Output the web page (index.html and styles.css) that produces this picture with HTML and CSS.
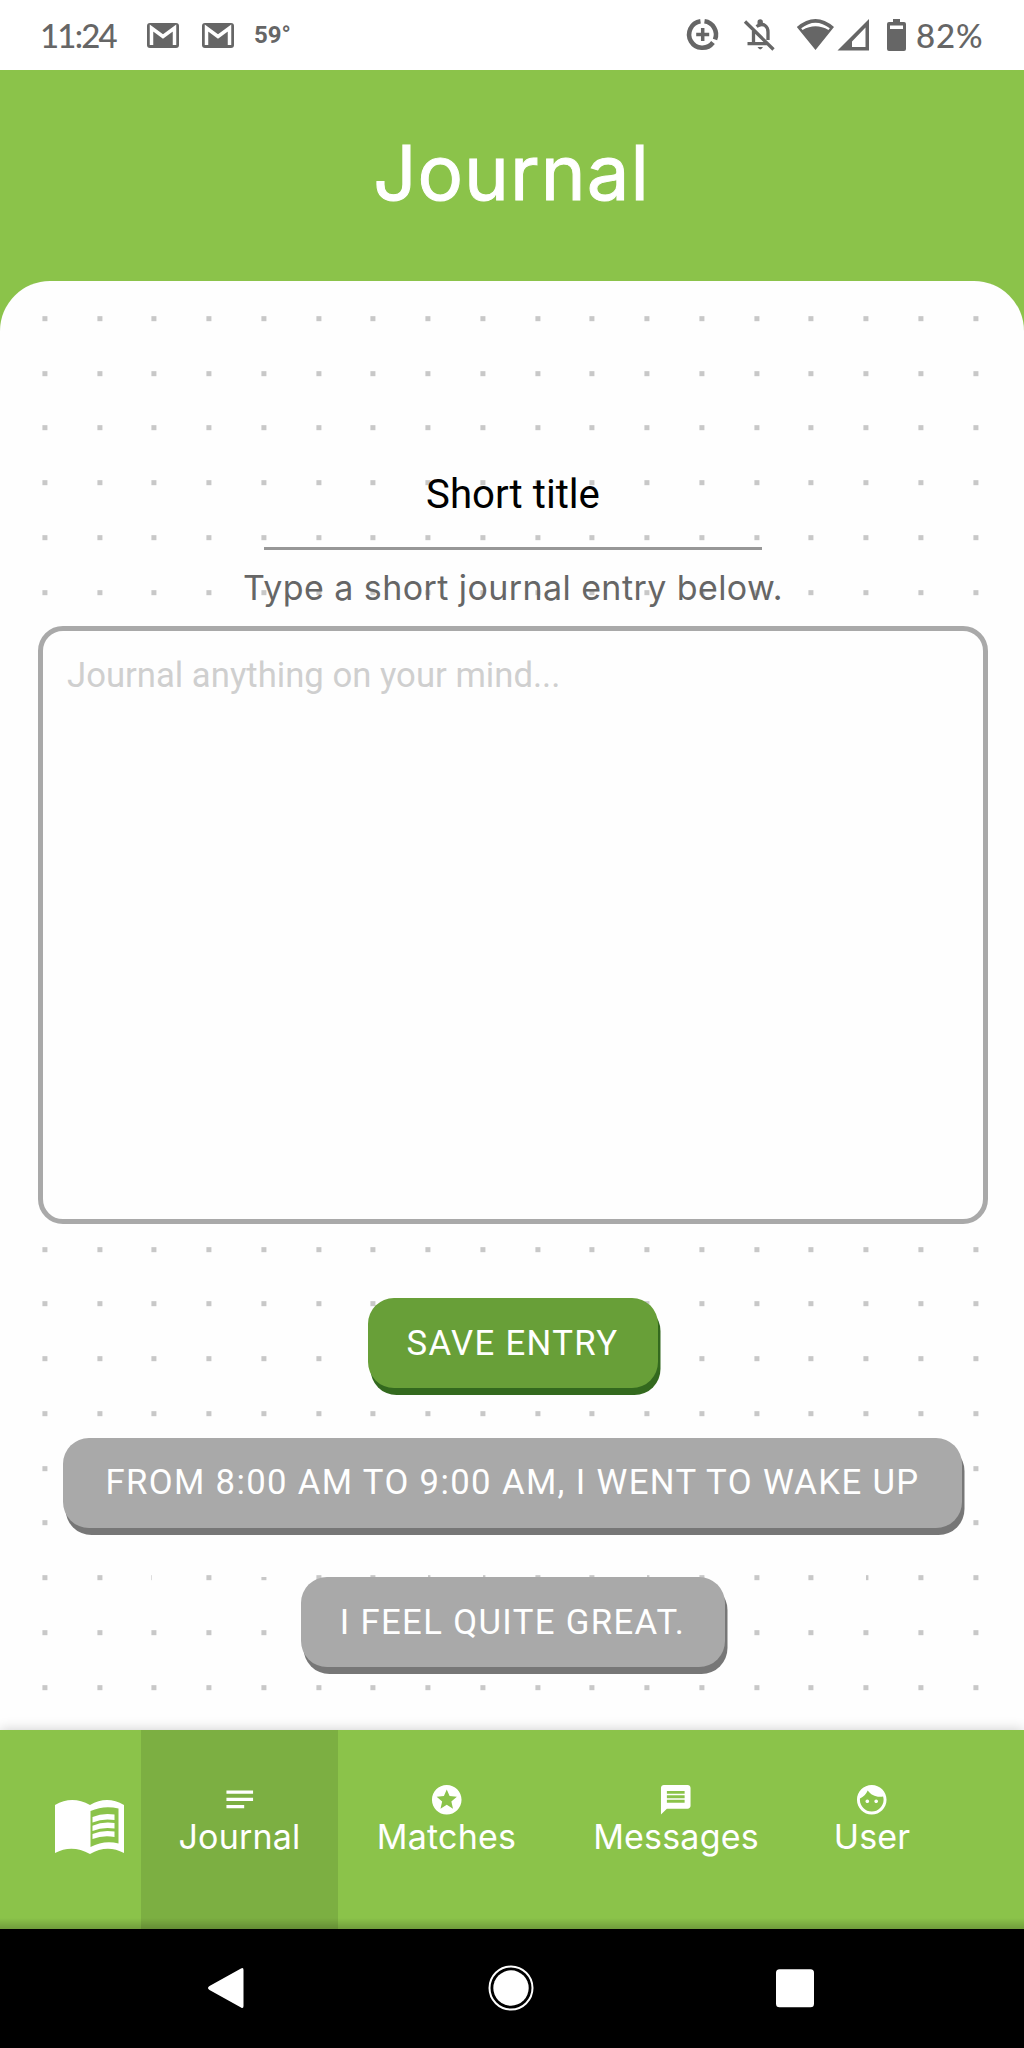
FILE: index.html
```
<!DOCTYPE html>
<html lang="en">
<head>
  <meta charset="utf-8" />
  <meta name="viewport" content="width=device-width, initial-scale=1" />
  <title>Journal</title>
  <link rel="stylesheet" href="styles.css">
</head>
<body>
  <div class="status">
    <span class="clock">11:24</span>
    <svg class="mail" viewBox="0 0 32 25"><rect width="32" height="25" rx="3"/><path class="line" d="M4.500 22V5L16 13.500 27.500 5V22"/></svg>
    <svg class="mail" viewBox="0 0 32 25"><rect width="32" height="25" rx="3"/><path class="line" d="M4.500 22V5L16 13.500 27.500 5V22"/></svg>
    <span class="temp">59°</span>
    <svg class="system" viewBox="660 0 250 70">
      <!-- data saver -->
      <g class="stroke">
        <path stroke-width="4.600" d="M700.500 21.300A13.300 13.300 0 1 0 713 42.500M704.500 21.300A13.300 13.300 0 0 1 715 39.500"/>
        <path stroke-width="3.500" d="M702.700 28v13M696.200 34.500h13"/>
      </g>
      <!-- muted bell -->
      <g class="stroke" stroke-width="3.300">
        <path d="M745 21.500L773.500 49.500M747.500 43.700h20M753.500 44V31M756.500 26.500C764 21.500 768 27 768 32v8"/>
      </g>
      <path d="M757.500 24v-2a2.700 2.700 0 0 1 5.400 0v2zM757.500 47h5.500q-2.700 4.800-5.500 0z"/>
      <!-- wifi and signal -->
      <path fill-rule="evenodd" d="M796.800 27Q815.500 11 834 27L815.500 50zM801.200 28.300L802.500 30Q815.500 22.500 828.500 30L829.800 28.300Q815.500 17 801.200 28.300z"/>
      <path fill-rule="evenodd" d="M869 19V50.500H837.500zM865.500 27.500L852 41.500V47H865.500z"/>
      <!-- battery -->
      <path fill-rule="evenodd" d="M893 19h7v3h4a2 2 0 0 1 2 2v25a2 2 0 0 1-2 2h-15a2 2 0 0 1-2-2V24a2 2 0 0 1 2-2h4zM890 25.500v3.500h13v-3.500z"/>
    </svg>
    <span class="charge">82%</span>
  </div>

  <header>
    <h1>Journal</h1>
  </header>

  <div class="backdrop">
    <main>
      <div class="title">Short title</div>
      <p class="hint">Type a short journal entry below.</p>
      <div class="entry">Journal anything on your mind...</div>
      <div class="actions">
        <button class="save">SAVE ENTRY</button>
        <button class="time">FROM 8:00 AM TO 9:00 AM, I WENT TO WAKE UP</button>
        <button class="mood">I FEEL QUITE GREAT.</button>
      </div>
    </main>
  </div>

  <nav>
    <a class="brand">
      <svg viewBox="0 0 70 54"><path fill-rule="evenodd" d="M0 5Q17-5 35 5Q52-5 69 5V53Q52 44 35 54Q17 44 0 53zM35.500 11V47Q49 40 63.500 43.500V8.500Q49 5 35.500 11z"/><path d="M37.500 17Q48 12.500 59.500 14.500V20Q48 18 37.500 22.500zM37.500 25.800Q48 21 59.500 23V28.500Q48 26.500 37.500 31zM37.500 34Q48 29.500 59.500 31.500V37Q48 35 37.500 39z"/></svg>
    </a>
    <a class="tab journal active">
      <svg viewBox="0 0 24 24"><path d="M3 5.700h18v2.200H3zM3 10.600h18v2.200H3zM3 15.500h12v2.200H3z"/></svg>
      <span>Journal</span>
    </a>
    <a class="tab matches">
      <svg viewBox="0 0 24 24"><path d="M11.990 2C6.470 2 2 6.480 2 12s4.470 10 9.990 10C17.520 22 22 17.520 22 12S17.520 2 11.990 2zm4.240 16L12 15.450 7.770 18l1.120-4.810-3.730-3.230 4.920-.42L12 5l1.920 4.530 4.920.42-3.730 3.230L16.230 18z"/></svg>
      <span>Matches</span>
    </a>
    <a class="tab messages">
      <svg viewBox="0 0 24 24"><path d="M20 2H4c-1.100 0-1.990.9-1.990 2L2 22l4-4h14c1.100 0 2-.9 2-2V4c0-1.100-.9-2-2-2zM6 9h12v2H6V9zm12 5H6v-2h12v2zm0-6H6V6h12v2z"/></svg>
      <span>Messages</span>
    </a>
    <a class="tab user">
      <svg viewBox="0 0 24 24"><path d="M9 11.750c-.69 0-1.250.56-1.250 1.250s.56 1.250 1.250 1.250 1.250-.56 1.250-1.250-.56-1.250-1.250-1.250zm6 0c-.69 0-1.250.56-1.250 1.250s.56 1.250 1.250 1.250 1.250-.56 1.250-1.250-.56-1.250-1.250-1.250zM12 2C6.480 2 2 6.480 2 12s4.480 10 10 10 10-4.480 10-10S17.520 2 12 2zm0 18c-4.410 0-8-3.590-8-8 0-.29.020-.58.050-.86 2.360-1.050 4.230-2.980 5.210-5.370C11.070 8.330 14.050 10 17.420 10c.78 0 1.530-.09 2.250-.26.210.71.330 1.470.33 2.260 0 4.410-3.590 8-8 8z"/></svg>
      <span>User</span>
    </a>
  </nav>

  <footer>
    <svg viewBox="0 0 48 48"><path d="M41 4.500Q43.500 3 43.500 6V42Q43.500 45 41 43.500L9.500 26Q6.500 24 9.500 22z"/></svg>
    <svg viewBox="0 0 48 48"><circle cx="24" cy="24" r="17.700"/><circle class="ring" cx="24" cy="24" r="21.500"/></svg>
    <svg viewBox="0 0 48 48"><rect x="5" y="5.200" width="38" height="38" rx="3.500"/></svg>
  </footer>
</body>
</html>
```

FILE: styles.css
```
* {
  box-sizing: border-box;
}

body {
  margin: 0;
  display: flex;
  flex-direction: column;
  height: 2048px;
  width: 1024px;
  background: #fff;
  font-family: Inter, "Noto Sans", sans-serif;
  overflow: hidden;
}

svg {
  display: block;
  fill: currentColor;
  flex-shrink: 0;
}

/* status bar */

.status {
  display: flex;
  align-items: center;
  height: 70px;
  padding-left: 40px;
  color: #666;
  white-space: nowrap;
}

.clock {
  width: 107px;
  font: 500 33px/70px Lato, sans-serif;
  letter-spacing: -1.800px;
}

.mail {
  width: 32px;
  height: 25px;
  margin-right: 23px;
}

.line {
  fill: none;
  stroke: #fff;
  stroke-width: 3.500px;
}

.temp {
  width: 149px;
  margin-left: -3px;
  font: 700 24px/70px Roboto, sans-serif;
}

.system {
  width: 250px;
  height: 70px;
  margin-left: 257px;
}

.stroke {
  fill: none;
  stroke: currentColor;
}

.charge {
  margin-left: 6px;
  font: 500 33px/70px Lato, sans-serif;
  letter-spacing: .8px;
}

header {
  height: 211px;
  background: #8bc34a;
  color: #fff;
}

h1 {
  margin: 0;
  padding-top: 56px;
  font-size: 76px;
  line-height: 92px;
  font-weight: 400;
  letter-spacing: 1px;
  text-align: center;
  text-indent: -1px;
  -webkit-text-stroke: 1px #fff;
}

/* dotted page */

.backdrop {
  height: 1449px;
  background: #8bc34a;
}

/* the white gradients rub out parts of the dots above the last button */
main {
  height: 100%;
  padding: 184px 36px 0 38px;
  border-radius: 50px 50px 0 0;
  background:
    linear-gradient(#fefefe, #fefefe) 152px 1293px / 6px 8px no-repeat,
    linear-gradient(#fefefe, #fefefe) 260px 1293px / 8px 3px no-repeat,
    linear-gradient(#fefefe, #fefefe) 425px 1293px / 3px 8px no-repeat,
    linear-gradient(#fefefe, #fefefe) 479px 1293px / 4px 8px no-repeat,
    linear-gradient(#fefefe, #fefefe) 643px 1293px / 4px 8px no-repeat,
    linear-gradient(#fefefe, #fefefe) 863px 1293px / 3px 8px no-repeat,
    url("data:image/svg+xml,%3Csvg xmlns='http://www.w3.org/2000/svg' width='54.75' height='54.75'%3E%3Crect x='42.200' y='35' width='5' height='5' fill='%23c8c8c8'/%3E%3C/svg%3E") 0 0 / 54.750px 54.750px,
    #fefefe;
}

.title {
  width: 498px;
  height: 85px;
  margin: 0 auto 0 226px;
  border-bottom: 3px solid #979797;
  color: #000;
  font: 400 40.200px/60px Roboto, sans-serif;
  text-align: center;
}

.hint {
  margin: 0;
  height: 76px;
  padding-top: 14px;
  color: #666;
  font-size: 34px;
  line-height: 48px;
  letter-spacing: .42px;
  text-align: center;
}

.entry {
  height: 598px;
  padding: 24px;
  border: 5px solid #a9a9a9;
  border-radius: 25px;
  background: #fefefe;
  color: #cfcfcf;
  font: 400 34.700px/40px Roboto, sans-serif;
}

.actions {
  display: flex;
  flex-direction: column;
  align-items: center;
  gap: 49.700px;
  padding: 74px 1px 0 0;
}

button {
  height: 90px;
  padding: 0;
  border: 0;
  border-radius: 26px;
  background: #a9a9a9;
  box-shadow: 2.500px 7px 0 #777;
  color: #fff;
  font: 400 34.700px/89px Roboto, sans-serif;
  letter-spacing: 1.370px;
  white-space: nowrap;
}

.save {
  width: 290px;
  background: #689f38;
  box-shadow: 2.500px 7px 0 #33691e;
}

.time {
  width: 899px;
}

.mood {
  width: 424px;
}

/* tabs */

nav {
  display: flex;
  height: 199px;
  background: linear-gradient(transparent 188px, rgba(0, 0, 0, .2)), #8bc34a;
  box-shadow: 0 0 12px rgba(0, 0, 0, .2);
  color: #fff;
}

.brand {
  width: 141px;
  padding: 70px 0 0 55px;
}

.brand svg {
  width: 70px;
  height: 54px;
}

.tab {
  display: flex;
  flex-direction: column;
  align-items: center;
  padding-top: 52px;
  font-size: 34px;
  line-height: 38px;
  letter-spacing: .2px;
}

.tab svg {
  width: 35.500px;
  height: 35.500px;
}

.journal { width: 197px; }
.matches { width: 217px; }
.messages { width: 242px; }
.user { width: 150px; }

.active {
  background: rgba(0, 0, 0, .1);
}

footer {
  display: flex;
  justify-content: space-between;
  height: 119px;
  padding: 35px 205px 0 200px;
  background: #000;
  color: #fff;
}

footer svg {
  width: 48px;
  height: 48px;
}

footer svg:nth-child(2) {
  margin-left: 3px;
}

.ring {
  fill: none;
  stroke: currentColor;
  stroke-width: 2px;
}
```
